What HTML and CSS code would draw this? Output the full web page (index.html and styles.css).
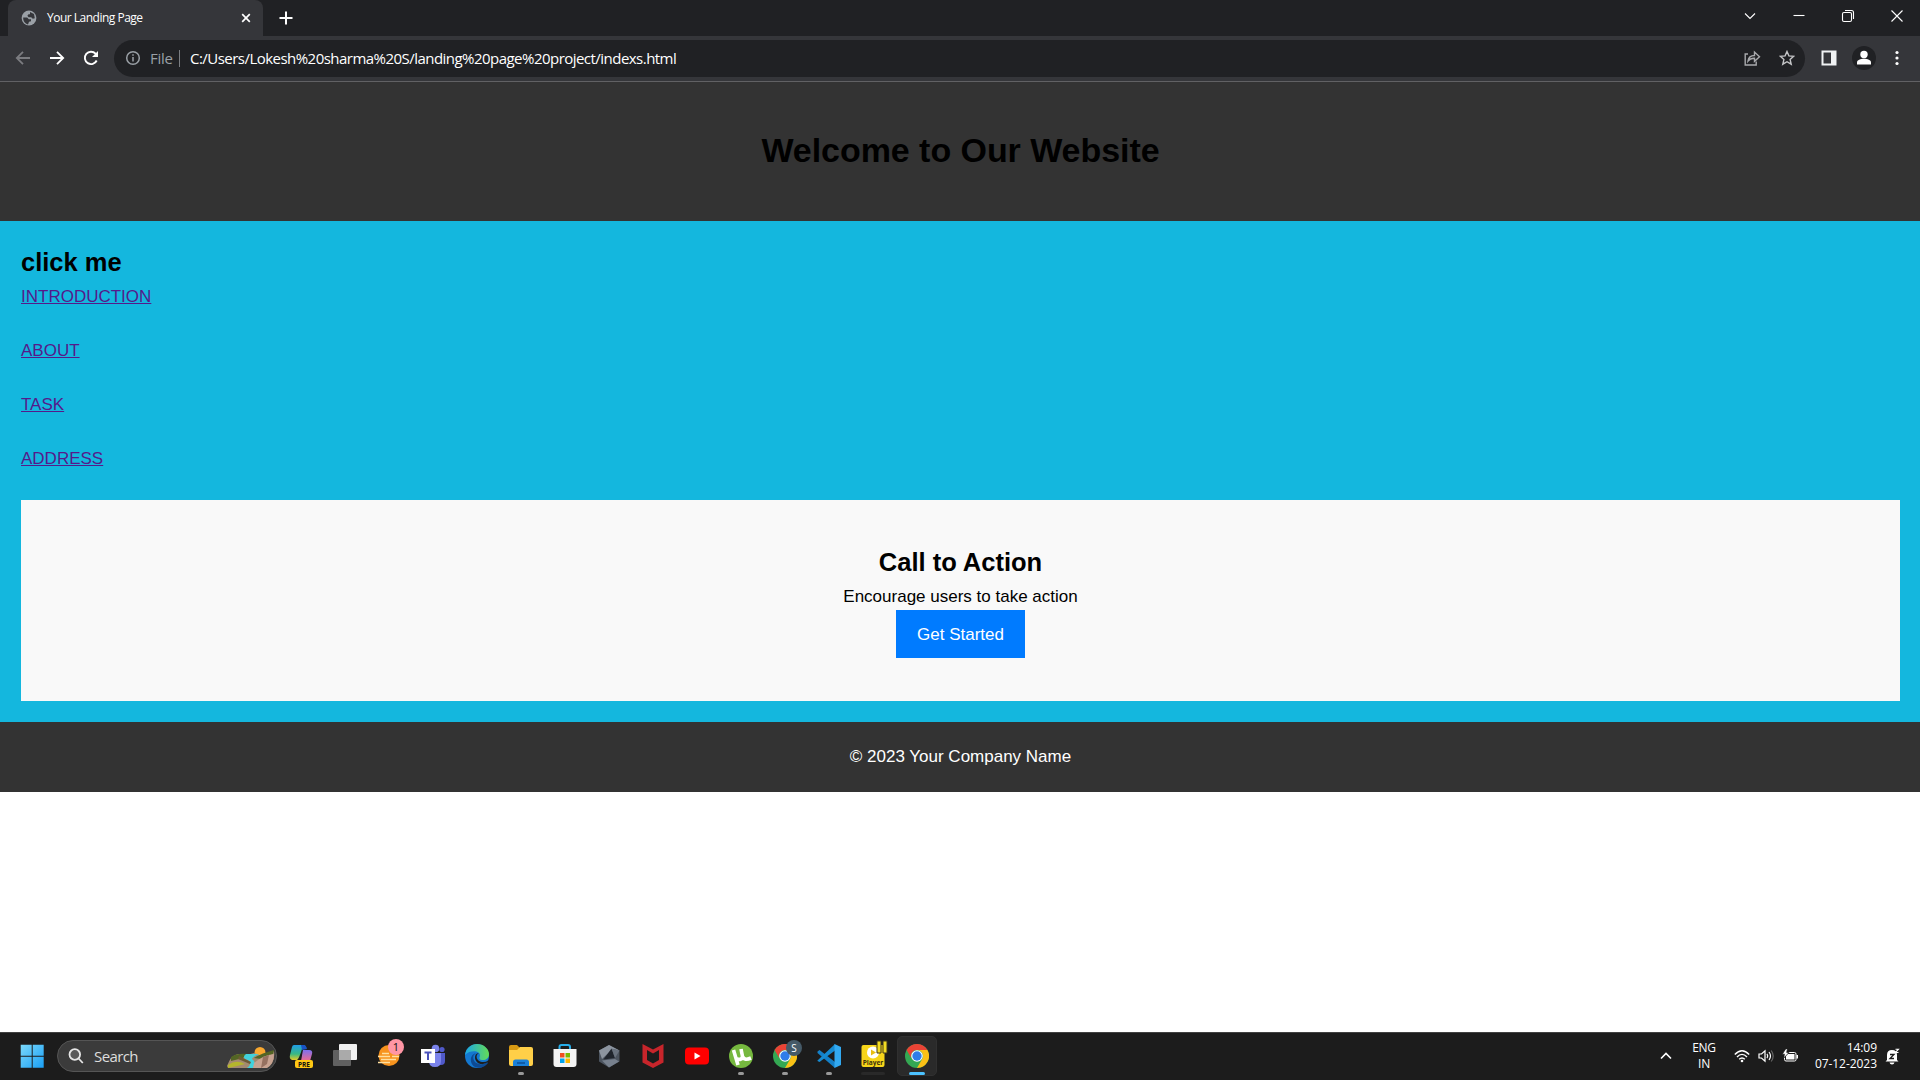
FILE: index.html
```html
<!DOCTYPE html>
<html lang="en">
<head>
<meta charset="utf-8">
<title>Your Landing Page</title>
<link rel="stylesheet" href="styles.css">
</head>
<body>
<div class="screen">
  <div class="tabstrip">
    <div class="tab">
      <svg class="globe" width="16" height="16" viewBox="0 0 16 16"><circle cx="8" cy="8" r="7.4" fill="#9aa0a6"/><path d="M2.2 7.5h4l1.6 1.8H10v2l-2 .5-1 2.6C4 13.800 2 11 2.200 7.500zM9 2l4 2 .8 4.200-2 .6-1.600-1.600H7.600L6.400 5.800 7.500 4.300H9z" fill="#35363a"/></svg>
      <span class="tab-title">Your Landing Page</span>
      <svg width="16" height="16" viewBox="0 0 16 16" stroke="#fff" stroke-width="1.7"><path d="M4.200 4.200l7.600 7.600M11.800 4.200l-7.600 7.600"/></svg>
    </div>
    <svg class="newtab" width="16" height="16" viewBox="0 0 16 16" stroke="#fff" stroke-width="2"><path d="M8 1.500v13M1.500 8h13"/></svg>
    <div class="wincontrols">
      <svg width="14" height="14" viewBox="0 0 14 14"><path d="M2 4.500l5 5 5-5"/></svg>
      <svg width="14" height="14" viewBox="0 0 14 14"><path d="M1.500 6.500h11"/></svg>
      <svg width="14" height="14" viewBox="0 0 14 14"><rect x="1.500" y="3.500" width="9" height="9" rx="1.500"/><path d="M4 1.500h6.500q2 0 2 2V10"/></svg>
      <svg width="14" height="14" viewBox="0 0 14 14"><path d="M1.500 1.500l11 11M12.500 1.500l-11 11"/></svg>
    </div>
  </div>
  <div class="toolbar">
    <svg width="16" height="16" viewBox="0 0 16 16" stroke="#7b7c80" stroke-width="1.800"><path d="M15 8H2M8 1.800L1.800 8 8 14.200"/></svg>
    <svg width="16" height="16" viewBox="0 0 16 16" stroke="#fff" stroke-width="1.800"><path d="M1 8h13M8 1.800L14.200 8 8 14.200"/></svg>
    <svg width="16" height="16" viewBox="0 0 16 16" stroke="#fff" stroke-width="1.900"><path d="M13.700 10.500A6.200 6.200 0 1 1 12.600 3.700L14 5.200"/><path d="M15 1v6H9z" fill="#fff" stroke="none"/></svg>
    <div class="omnibox">
      <svg width="16" height="16" viewBox="0 0 16 16" stroke="#9aa0a6" stroke-width="1.500"><circle cx="8" cy="8" r="6.300"/><path d="M8 7v4.500M8 4.200v1.600"/></svg>
      <span class="scheme">File</span>
      <span class="divider"></span>
      <span class="url">C:/Users/Lokesh%20sharma%20S/landing%20page%20project/indexs.html</span>
      <svg class="share" width="17" height="16" viewBox="0 0 17 16" stroke="#a8a9ac" stroke-width="1.400"><path d="M4 4H1.200v11h11v-3.500"/><path d="M4 11c.5-4 3-5.500 6.500-5.500V2l5 4.700-5 4.600V8.200C7.500 8 5.500 9 4 11z"/></svg>
      <svg width="16" height="16" viewBox="0 0 16 16" stroke="#c4c5c7" stroke-width="1.400"><path d="M8 1.500l1.900 4.400 4.800.4-3.600 3.200 1.100 4.700L8 11.700l-4.200 2.500 1.100-4.700L1.300 6.300l4.800-.4z"/></svg>
    </div>
    <svg class="panel" width="16" height="16" viewBox="0 0 16 16"><path d="M.5.500h15v15H.5z" fill="#f1f3f4"/><path d="M2.500 2.500h7.500v11H2.500z" fill="#35363a"/></svg>
    <svg class="avatar" width="24" height="24" viewBox="0 0 24 24"><circle cx="12" cy="12" r="12" fill="#202124"/><circle cx="12" cy="8.500" r="3.700" fill="#fff"/><path d="M5 18.500v-2c0-2.500 3.500-3.700 7-3.700s7 1.200 7 3.700v2z" fill="#fff"/></svg>
    <svg class="more" width="4" height="16" viewBox="0 0 4 16"><circle cx="2" cy="2.500" r="1.600"/><circle cx="2" cy="8" r="1.600"/><circle cx="2" cy="13.500" r="1.600"/></svg>
  </div>

  <div class="page">
    <header class="hero"><h1>Welcome to Our Website</h1></header>
    <main class="main">
      <h2>click me</h2>
      <nav class="links">
        <a href="#">INTRODUCTION</a>
        <a href="#">ABOUT</a>
        <a href="#">TASK</a>
        <a href="#">ADDRESS</a>
      </nav>
      <section class="cta">
        <h2>Call to Action</h2>
        <p>Encourage users to take action</p>
        <a class="button" href="#">Get Started</a>
      </section>
    </main>
    <footer class="footer">© 2023 Your Company Name</footer>
  </div>

  <div class="taskbar">
    <div class="app"><svg width="24" height="24" viewBox="0 0 24 24"><defs><linearGradient id="win" x2="1" y2="1" gradientUnits="objectBoundingBox"><stop stop-color="#7bd9fb"/><stop offset="1" stop-color="#1a9ff5"/></linearGradient></defs><path d="M.7.700h11v11H.7zM12.700.700h11v11h-11zM.7 12.700h11v11H.7zM12.700 12.700h11v11h-11z" fill="url(#win)"/></svg></div>
    <div class="search">
      <svg width="16" height="16" viewBox="0 0 16 16" stroke="#e6e6e6" stroke-width="1.800"><circle cx="6.800" cy="6.500" r="5.300" fill="#5b5b5b"/><path d="M10.600 10.500l4.200 4.500"/></svg>
      <span>Search</span>
      <svg class="scene" width="48" height="24" viewBox="0 0 48 24"><circle cx="33" cy="6.500" r="5.500" fill="#f9a82f"/><path d="M0 20Q4 9 11 8l9 1 7-2 8 3 12-5q1 8-2 12-3 5-8 5H1z" fill="#a48a70"/><path d="M4 11q6-4 16-3l-4 4-12 3zM27 12q8-5 20-8l-1 4-12 5z" fill="#536524"/><path d="M19 8q-5 4 2 6 5 3-1 8h6q4-6-1-9 0-2 7-5z" fill="#42d1dc"/><path d="M1 19q8-6 17-1l-8 2-9 2z" fill="#b5b62c"/><path d="M27 17q9-8 20-9 0 10-7 14H26z" fill="#c8a391"/><path d="M36 11l6-2-2 9-6 4z" fill="#967160"/><path d="M12 10l12 6-1 2-12-5z" fill="#6d5a35"/></svg>
    </div>
    <div class="app"><svg width="24" height="24" viewBox="0 0 24 24"><defs><linearGradient id="cpa" x2="0" y2="1"><stop stop-color="#209de6"/><stop offset=".6" stop-color="#39b883"/><stop offset="1" stop-color="#e4ca25"/></linearGradient><linearGradient id="cpb" x2="0" y2="1"><stop stop-color="#7c70ef"/><stop offset="1" stop-color="#f16b8c"/></linearGradient></defs><path d="M5 1h9q3 0 2.500 3L13 5q-3 10-5 11H3q-3-1-2-5l2-8q.5-2 2-2z" fill="url(#cpa)"/><path d="M12 1h3q2 0 3 4l-5 1z" fill="#1954c5"/><path d="M14 6h6q4 0 3 4l-2 7h-9z" fill="url(#cpb)"/><rect x="6" y="16" width="18" height="8" rx="2" fill="#ffc814"/><text x="15" y="22.600" class="pre">PRE</text></svg></div>
    <div class="app"><svg width="24" height="24" viewBox="0 0 24 24"><rect x="6" width="18" height="16" rx="1" fill="#f0f0f0"/><rect y="6" width="18" height="16" rx="1" fill="#686868" fill-opacity=".9"/><path d="M6 6h12v10H6z" fill="#aaa"/></svg></div>
    <div class="app"><svg width="24" height="24" viewBox="0 0 24 24"><circle cx="12" cy="11.500" r="10.500" fill="#f7931e"/><path d="M1 12.500h12M4 15.500h15M1 18.500h12M15 12.500h7M5 9.500h7" stroke="#ffe0a0" stroke-width="1.400"/></svg><span class="badge count">1</span></div>
    <div class="app"><svg width="24" height="24" viewBox="0 0 24 24"><circle cx="14.500" cy="4.500" r="3.800" fill="#7b83eb"/><circle cx="21" cy="5.500" r="2.600" fill="#5059c9"/><path d="M14 9h10v8q0 4-4 4h-4z" fill="#5059c9"/><path d="M8 9h12v8q0 6-6 6t-6-6z" fill="#7b83eb"/><rect y="5" width="14" height="14" fill="#fff"/><path d="M3.500 8.500h7M7 8.500V16" stroke="#4b53bc" stroke-width="2"/></svg></div>
    <div class="app"><svg width="24" height="24" viewBox="0 0 24 24"><defs><linearGradient id="edge"><stop stop-color="#1aa7e8"/><stop offset="1" stop-color="#64dc55"/></linearGradient></defs><circle cx="12" cy="12" r="12" fill="#1478d0"/><path d="M0 11C1 4 6 0 12 0c7 0 12 5 12 10 0 4-3 6-6 6-4 0-4-2-3-4 1-5-9-7-15-1z" fill="url(#edge)"/><path d="M13 9c-7 0-6 10 1 11 3 1 6 0 8-2l1 1c-3 4-8 6-13 4-6-3-6-14 3-14z" fill="#0d4a94"/><path d="M14 9c-4 2-3 8 3 9q4 .4 6-1.500l.5.800q-3 3.500-8 2.700C9 19 8 9 14 9z" fill="#1e1e1e"/></svg></div>
    <div class="app open"><svg width="24" height="24" viewBox="0 0 24 24"><path d="M0 3q0-2 2-2h6l3 3v5H0z" fill="#d89a13"/><path d="M0 6h8l3-3h11q2 0 2 2v15q0 2-2 2H2q-2 0-2-2z" fill="#ffcf48"/><path d="M4 22v-4q0-2.500 2.500-2.500h11q2.500 0 2.500 2.500v4z" fill="#1a80d8"/><path d="M8 19h8" stroke="#0f5ba7" stroke-width="2"/></svg></div>
    <div class="app"><svg width="24" height="24" viewBox="0 0 24 24"><path d="M6.500 6V3q0-2 2-2h6.500q2 0 2 2v3" fill="none" stroke="#27aeea" stroke-width="2"/><path d="M.5 5h23v15q0 3-3 3h-17q-3 0-3-3z" fill="#f3f3f3"/><path d="M7 9h4.500v4.500H7z" fill="#f04e20"/><path d="M12.500 9H17v4.500h-4.500z" fill="#7bb900"/><path d="M7 14.500h4.500V19H7z" fill="#00a3ee"/><path d="M12.500 14.500H17V19h-4.500z" fill="#ffb700"/></svg></div>
    <div class="app"><svg width="24" height="24" viewBox="0 0 24 24"><path d="M12 1l10.500 5.500v11L12 23.500 2 17.500v-11z" fill="#4c545f"/><path d="M12 1l10.500 5.500-7-1.500L5 15 2 6.500z" fill="#8d95a0"/><path d="M14.500 4.500L18 14 6.500 15.500z" fill="#20252d"/><path d="M14.500 4.500l8 2L18 14z" fill="#69727e"/><path d="M5 16.500L18 15l4 2.500-10 6z" fill="#77808d"/></svg></div>
    <div class="app"><svg width="24" height="24" viewBox="0 0 24 24"><path d="M1.500 0L12 5.500 22.500 0v18.500L12 24 1.500 18.500zM6 6v10l6 3.500 6-3.500V6l-6 3.500z" fill="#c8252b" fill-rule="evenodd"/></svg></div>
    <div class="app"><svg width="24" height="24" viewBox="0 0 24 24"><rect y="3.500" width="24" height="17" rx="4" fill="#f00"/><path d="M9.500 8.500l6 3.500-6 3.500z" fill="#fff"/></svg></div>
    <div class="app open"><svg width="24" height="24" viewBox="0 0 24 24"><circle cx="12" cy="12" r="12" fill="#76b83f"/><path d="M4.500 6l4.500 15M7.500 14.500q5 2.500 6-2L12 5M13.700 12.500q1.500 4.500 8.300 1.500" fill="none" stroke="#fff" stroke-width="3.600"/></svg></div>
    <div class="app open"><svg width="24" height="24" viewBox="0 0 24 24"><g id="chrome"><circle cx="12" cy="12" r="12" fill="#34a853"/><path d="M1.600 6A12 12 0 0 1 22.400 6H12a6 6 0 0 0-5.200 9z" fill="#ea4335"/><path d="M22.400 6A12 12 0 0 1 12 24l5.200-9A6 6 0 0 0 12 6z" fill="#fbc116"/><circle cx="12" cy="12" r="5.800" fill="#fff"/><circle cx="12" cy="12" r="4.700" fill="#2f7de9"/></g></svg><span class="badge profile">S</span></div>
    <div class="app open"><svg width="24" height="24" viewBox="0 0 24 24"><path d="M.5 7.500L2.500 6 18 18v6L.5 9z" fill="#1480c8"/><path d="M.5 16.500L18 0v6.500L2.500 18l-2-1z" fill="#168bd2"/><path d="M17.500 0L24 3v18l-6.500 3z" fill="#32a9f1"/></svg></div>
    <div class="app faint"><svg width="24" height="24" viewBox="0 0 24 24"><rect x=".5" y="1" width="23" height="22" rx="2" fill="#f7d51a"/><circle cx="12" cy="8.500" r="6" fill="#fff"/><path d="M10 5.500l5 3-5 3z" fill="#e9bf13"/><text x="12" y="21" class="player">Player</text></svg><svg class="badge pause" width="12" height="14" viewBox="0 0 12 14"><path d="M1 1h4v12H1zM7 1h4v12H7z" fill="#f3dc23" stroke="#40391b"/></svg></div>
    <div class="app active"><svg width="24" height="24" viewBox="0 0 24 24"><use href="#chrome"/></svg></div>

    <div class="tray">
      <svg width="12" height="8" viewBox="0 0 12 8" stroke="#fff" stroke-width="1.600"><path d="M1 6.500L6 1.500l5 5"/></svg>
      <div class="lang">ENG<br>IN</div>
      <svg class="wifi" width="16" height="14" viewBox="0 0 16 14" stroke="#fff" stroke-width="1.400"><path d="M.8 5.500Q8-2 15.200 5.500M3 8Q8 2.800 13 8M5.200 10.300Q8 7.500 10.800 10.300"/><circle cx="8" cy="12" r="1.300" fill="#fff" stroke="none"/></svg>
      <svg class="sound" width="16" height="14" viewBox="0 0 16 14" stroke="#fff" stroke-width="1.200"><path d="M1 5h2.500L7 1.800v10.400L3.500 9H1zM9 4.800q1.500 2.200 0 4.400M11 3q3 4 0 8"/><path d="M13.200 1.500q4 5.500 0 11" stroke="#666"/></svg>
      <svg class="battery" width="17" height="14" viewBox="0 0 17 14"><rect x="2.500" y="3.500" width="11.500" height="8.500" rx="1.500" stroke="#fff"/><path d="M4 5h8.500v5.500H4zM14.500 6h1.500v3.500h-1.500z" fill="#fff"/><path d="M3.800-.3L.2 5.200H2.500L1.700 9.200 7 3.500H4.700L5.500-.3z" fill="#fff" stroke="#1c1c1c" stroke-width=".8"/></svg>
      <div class="clock">14:09<br>07-12-2023</div>
      <svg class="bell" width="15" height="17" viewBox="0 0 15 17"><path d="M2 12V7q0-5 5-5t5 5v5l1.500 1.500H.5zM4.500 14.500h5Q9 16.500 7 16.500t-2.500-2z" fill="#fff"/><path d="M5 6.500h4l-4 4h4" fill="none" stroke="#1c1c1c" stroke-width="1.300"/><path d="M10.500 1.200h3l-3 3.300h3" fill="none" stroke="#fff" stroke-width="1.100"/></svg>
    </div>
  </div>
</div>
</body>
</html>
```
FILE: styles.css
```css
* { box-sizing: border-box; margin: 0; padding: 0; }
body { background: #fff; overflow: hidden; font-family: "Open Sans", sans-serif; }
svg { display: block; flex: none; fill: none; }
.screen { width: 1920px; height: 1080px; display: flex; flex-direction: column; }

/* browser window */
.tabstrip { height: 36px; flex: none; background: #202124; display: flex; padding-left: 8px; }
.tab { width: 255px; height: 36px; background: #35363a; border-radius: 8px 8px 0 0; display: flex; align-items: center; padding: 0 9px 0 13px; }
.globe { margin-right: 10px; }
.tab-title { flex: 1; color: #fff; font-size: 12px; letter-spacing: -.5px; white-space: nowrap; padding-bottom: 1px; }
.newtab { margin: 10px 0 0 15px; }
.wincontrols { margin: 9px 16px 0 auto; display: flex; gap: 35px; stroke: #fff; stroke-width: 1.1; }
.toolbar { height: 46px; flex: none; background: #35363a; border-bottom: 1px solid #616164; display: flex; align-items: center; padding: 0 21px 1px 15px; }
.toolbar > svg { margin-right: 18px; }
.omnibox { width: 1692px; height: 37px; margin-left: -3px; border-radius: 19px; background: #202124; display: flex; align-items: center; padding: 0 10px 0 11px; font-size: 15px; }
.scheme { color: #9aa0a6; margin-left: 9px; width: 23px; letter-spacing: -.3px; padding-bottom: 1px; }
.divider { width: 1px; height: 17px; background: #7b7e82; margin: 0 10px 0 6px; }
.url { color: #fff; letter-spacing: -.53px; white-space: nowrap; padding-bottom: 1px; }
.share { margin: 0 18px 0 auto; }
.toolbar > .panel { margin: 0 15px 0 16px; }
.toolbar > .avatar { margin-right: 19px; }
.toolbar > .more { margin: 0; fill: #fff; }

/* landing page */
.page { flex: 1; background: #fff; font: 17px/27.2px "Liberation Sans", Arial, sans-serif; color: #000; }
.hero { height: 139px; background: #333; text-align: center; padding: 41px 0 0 1px; }
h1 { font-size: 34px; line-height: 54.4px; letter-spacing: -.05px; }
h2 { font-size: 25.5px; line-height: 40.8px; }
.main { height: 501px; background: #14b7de; padding: 21px 20px 21px 21px; }
.links { display: grid; grid-auto-rows: 54.2px; justify-items: start; height: 217px; }
.links a { color: #551a8b; height: 27px; }
.cta { height: 201px; background: #f9f9f9; text-align: center; padding-top: 42px; }
.button { display: block; width: 129px; height: 48px; margin: 0 auto; background: #007bff; color: #fff; text-decoration: none; line-height: 49px; }
.footer { height: 70px; background: #333; color: #fff; text-align: center; padding: 21px 0 0 1px; }

/* taskbar */
.taskbar { height: 48px; flex: none; background: #1c1c1c; border-top: 1px solid #414141; display: flex; align-items: center; padding: 0 0 1px 10px; color: #fff; }
.app { width: 44px; height: 46px; display: flex; align-items: center; justify-content: center; position: relative; }
.app::after { content: ""; position: absolute; bottom: 4px; left: 19px; width: 6px; height: 3px; border-radius: 2px; }
.open::after { background: #999; }
.faint::after { left: 10px; width: 24px; background: #292929; }
.active { width: 40px; height: 40px; margin-left: 2px; background: #2a2a2a; border: 1px solid #303030; border-radius: 5px; }
.active::after { left: 11px; bottom: 0; width: 16px; background: #4cc2ff; }
.search { width: 220px; height: 32px; margin: 0 2px 0 3px; border: 1px solid #555; border-radius: 16px; background: #3b3b3b; display: flex; align-items: center; padding: 0 1px 0 10px; font-size: 15px; color: #ddd; overflow: hidden; }
.search span { margin-left: 10px; letter-spacing: -.6px; }
.scene { margin: 3px 0 0 auto; }
.badge { position: absolute; border-radius: 50%; width: 16px; height: 16px; text-align: center; line-height: 16px; }
.count { left: 21px; top: 6px; background: #ff96a5; color: #111; font-size: 11px; }
.profile { left: 23px; top: 7px; background: #455a68; font-size: 10px; }
.pause { left: 25px; top: 7px; border-radius: 0; width: 12px; height: 14px; }
.pre { font: bold 6.5px "Open Sans", sans-serif; fill: #111; text-anchor: middle; }
.player { font: bold 6.5px "Open Sans", sans-serif; fill: #3c310b; text-anchor: middle; }
.tray { margin-left: auto; margin-right: 20px; display: flex; align-items: center; font-size: 12px; line-height: 16px; }
.lang { margin-left: 20px; width: 24px; text-align: center; letter-spacing: -.3px; }
.wifi { margin-left: 18px; }
.sound { margin-left: 8px; }
.battery { margin-left: 8px; }
.clock { margin-left: 15px; width: 63px; text-align: right; letter-spacing: -.05px; white-space: nowrap; }
.bell { margin-left: 8px; }
```
